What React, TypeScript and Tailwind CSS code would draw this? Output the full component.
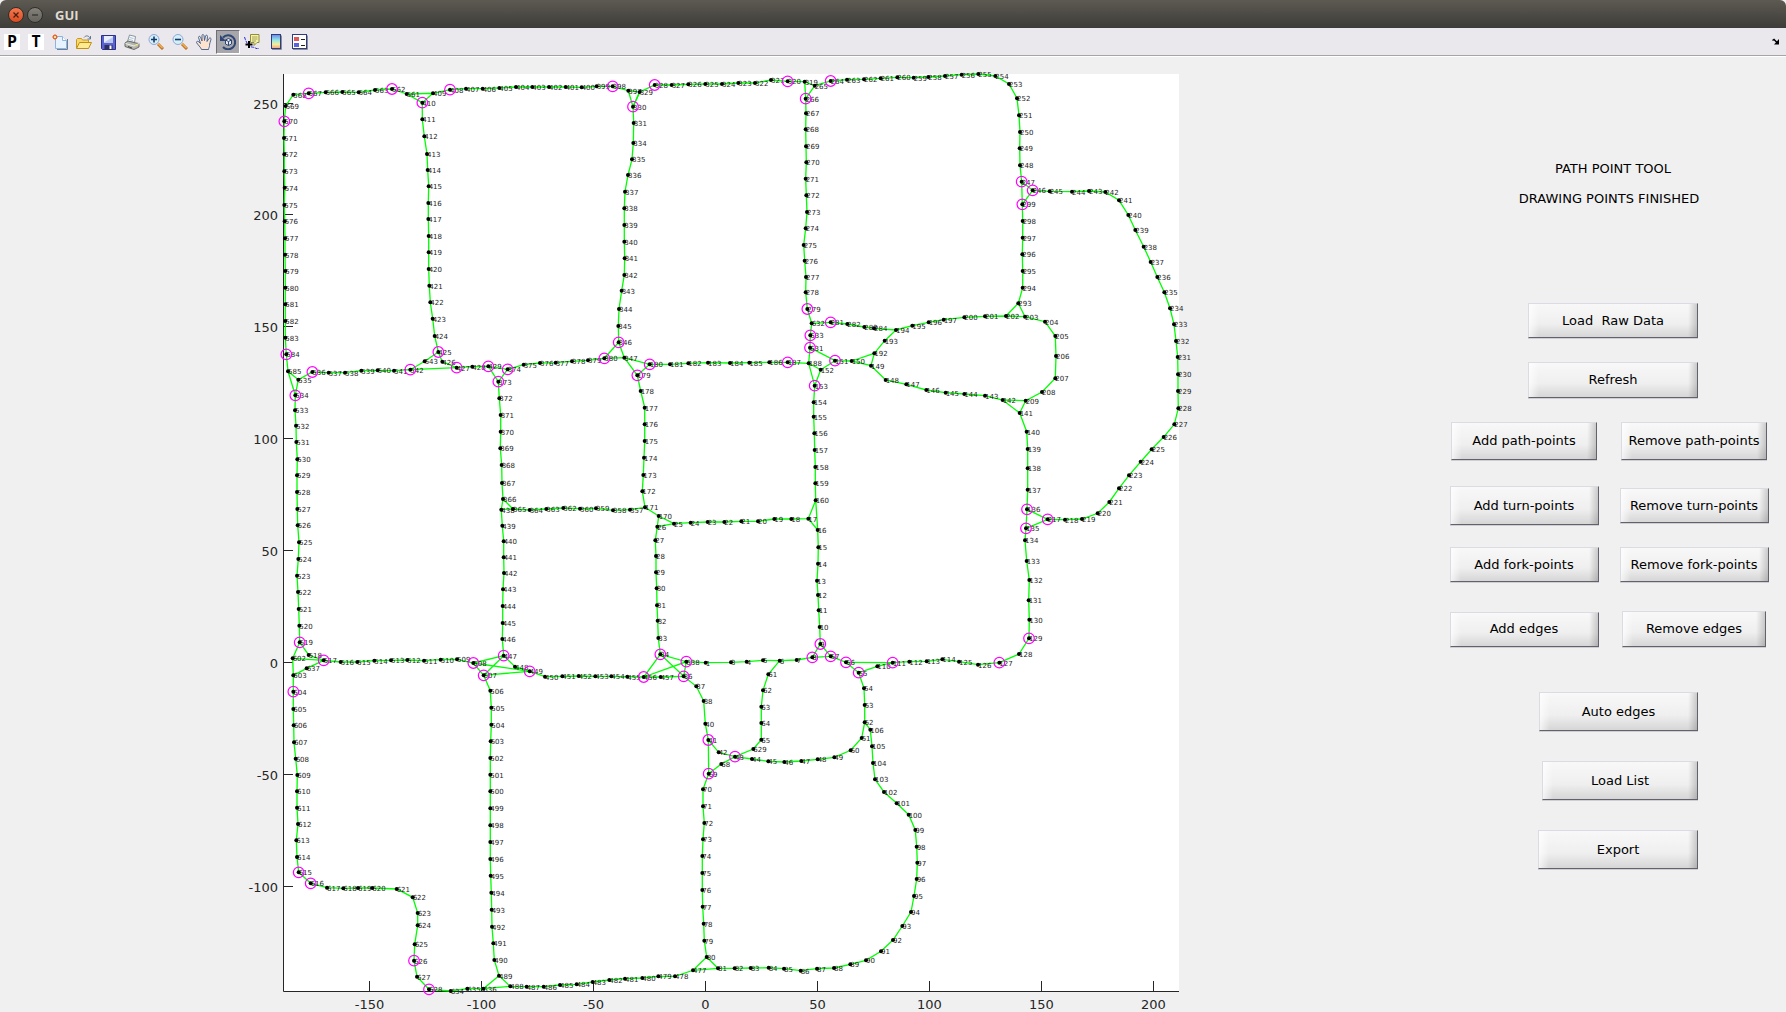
import type { ReactNode } from "react";

/* ---------- map data ---------- */

// Each sheet has its own origin; the entries are "id x y" in thirds of a unit.
const SHEETS: { x: number; y: number; points: string }[] = [
  {
    x: 270,
    y: 60,
    points: `568 70 104,567 116 100,566 167 97,565 217 96,564 266 97,563 315 90,562 366 87,561 410 102,409 489 100,408 540 89,407 588 86,406 638 86,405 688 84,404 738 81,403 787 81,402 837 81,401 887 81,400 935 82,
410 457 128,411 457 178,412 463 229,413 471 282,414 473 330,415 476 379,416 475 429,417 475 477,418 476 528,419 476 577,420 476 627,421 478 677,422 481 727,423 488 776,424 494 828,425 505 876,426 517 905,427 560 923,428 607 920,429 655 919,374 713 928,373 685 965,375 761 914,376 810 909,377 857 908,378 906 904,
569 47 138,570 43 184,571 42 234,572 43 283,573 43 334,574 44 383,575 43 435,576 44 484,577 45 535,578 45 584,579 46 633,580 46 683,581 46 733,582 46 783,583 46 833,584 49 883,585 54 934,535 85 959,536 127 936,537 176 938,538 225 938,539 274 932,540 323 931,541 372 932,542 421 929,543 464 904`,
  },
  {
    x: 580,
    y: 60,
    points: `399 50 79,398 98 79,397 145 92,329 179 96,328 224 75,327 275 75,326 325 73,325 376 72,324 426 72,323 475 69,322 525 69,321 573 60,320 623 64,319 674 65,265 704 77,264 752 63,263 801 59,262 852 58,261 902 55,
330 159 140,331 161 189,334 160 249,335 156 298,336 144 345,337 135 395,338 133 445,339 133 495,340 133 545,341 134 595,342 133 645,343 125 692,344 117 747,345 115 798,346 116 847,347 133 893,380 73 895,379 24 901,180 209 913,179 172 946,181 270 913,182 325 910,183 384 908,184 450 909,185 508 908,186 568 907,187 623 907,188 686 910,152 722 929,153 704 977,631 690 863,633 691 826,632 695 790,281 752 787,282 802 792,283 853 801,284 882 805,193 914 842,192 883 880,151 765 902,150 815 903,149 873 917,148 917 960,
266 677 116,267 678 160,268 677 208,269 678 259,270 679 307,271 677 356,272 679 406,273 681 456,274 677 505,275 671 555,276 674 602,277 678 651,278 677 697,279 682 747`,
  },
  {
    x: 890,
    y: 60,
    points: `260 22 52,259 71 53,258 115 51,257 165 48,256 215 44,255 265 42,254 316 48,253 357 72,252 381 115,251 387 166,250 390 216,249 389 265,248 390 316,247 395 365,246 428 391,245 479 394,244 546 395,243 597 393,242 646 396,241 687 421,240 715 465,239 736 510,238 761 560,237 782 606,236 802 651,235 823 697,234 840 745,233 852 793,232 858 843,231 863 891,230 864 943,
299 397 433,298 398 483,297 398 533,296 397 583,295 398 633,294 398 683,293 385 730,202 348 768,203 405 770,201 285 769,200 223 772,197 161 779,196 116 787,195 67 797,194 18 810,204 465 785,205 496 828,206 498 888,207 496 955`,
  },
  {
    x: 890,
    y: 370,
    points: `208 456 66,209 407 92,141 389 129,142 338 90,143 285 77,144 223 72,145 167 68,146 109 60,147 49 43,140 410 185,139 413 237,138 413 295,137 413 359,136 411 418,135 408 475,134 405 511,133 410 573,132 418 630,131 416 691,130 418 749,129 417 805,128 387 852,127 328 878,126 264 884,125 207 875,114 157 868,113 110 874,112 58 875,111 8 878,
217 473 448,218 525 449,219 576 447,220 623 430,221 658 396,222 687 355,223 717 316,224 752 275,225 785 238,226 821 201,227 853 163,228 865 115,229 864 63`,
  },
  {
    x: 270,
    y: 370,
    points: `534 76 76,533 75 121,532 78 167,531 79 216,530 82 268,529 81 316,528 81 366,527 82 417,526 83 466,525 87 517,524 85 567,523 81 617,522 84 666,521 86 717,520 88 767,519 89 817,518 116 855,517 161 871,602 68 865,637 110 895,603 70 916,604 70 965,516 212 876,515 262 876,514 313 872,513 363 871,512 412 870,511 462 872,510 512 869,509 561 868,508 610 879,507 641 916,506 661 962,447 701 857,448 735 890,449 779 904,450 825 920,451 877 919,452 926 918,
372 688 85,371 692 135,370 692 185,369 691 235,368 695 285,367 696 339,366 699 387,365 729 417,438 694 419,364 779 420,363 829 417,362 880 414,439 697 467,440 701 514,441 701 562,442 702 609,443 699 658,444 698 708,445 698 759,446 697 807`,
  },
  {
    x: 580,
    y: 370,
    points: `360 0 416,359 48 415,358 99 421,357 150 419,171 195 412,170 236 438,172 187 364,173 190 315,174 192 263,175 194 213,176 194 163,177 194 113,178 182 63,25 282 461,26 232 470,24 332 458,23 383 456,22 433 456,21 484 454,20 534 454,19 583 447,18 634 447,17 685 446,16 713 480,160 707 391,159 706 340,158 706 291,157 704 240,156 703 190,155 701 140,154 701 97,
15 715 532,14 714 581,13 711 632,12 714 675,11 716 721,10 719 771,9 721 822,8 697 862,57 752 859,7 650 870,6 599 872,5 549 871,4 500 875,3 453 877,1 377 878,638 319 875,34 241 853,33 235 804,32 233 752,31 231 706,30 230 655,29 228 607,28 228 558,27 226 511,36 311 919,456 191 921,457 242 921,455 142 920,454 94 919,453 46 919,37 349 949,61 565 913,62 549 961,56 798 877,55 836 908,110 892 889,54 852 955`,
  },
  {
    x: 240,
    y: 690,
    points: `605 160 57,606 161 106,607 162 157,608 167 206,609 172 255,610 171 304,611 171 353,612 174 402,613 169 451,614 171 501,615 176 547,616 212 580,617 261 593,618 310 595,619 354 594,620 397 594,621 470 597,622 518 622,623 533 669,624 533 706,625 524 763,626 522 812,627 531 860,628 567 898,634 632 903,635 682 896,636 730 896,
505 754 53,504 754 104,503 752 154,502 751 204,501 751 254,500 751 304,499 751 355,498 751 406,497 751 456,496 751 507,495 752 557,494 754 608,493 755 659,492 756 710,491 760 760,490 763 810,489 777 857,488 811 889,487 860 890,486 911 890,485 960 885`,
  },
  {
    x: 570,
    y: 690,
    points: `38 401 33,40 406 101,41 415 150,42 446 187,43 495 200,44 546 207,45 595 214,46 643 216,47 694 213,48 743 208,49 793 202,50 842 181,51 875 144,52 884 97,53 884 45,106 901 119,105 906 169,104 909 219,103 915 268,102 942 306,101 980 340,100 1016 374,99 1036 420,98 1040 470,97 1042 518,96 1040 567,95 1032 618,94 1023 666,93 997 708,92 969 750,91 933 784,90 888 811,89 841 823,88 792 834,87 741 836,86 692 842,85 642 836,84 596 833,83 542 834,82 494 835,81 444 835,80 410 801,
629 550 177,65 574 149,64 574 99,63 574 50,68 454 222,69 416 251,70 399 298,71 399 349,72 403 399,73 399 448,74 397 498,75 397 549,76 397 600,77 398 650,78 401 701,79 403 752,477 369 841,478 315 859,479 265 859,480 217 864,481 165 866,482 118 870,483 68 876,484 20 883`,
  },
];

// Runs of connected points; "a-b" walks every existing id between a and b.
const PATHS = [
  "585-561,410-425,426-429,374-380,347,180-188,153-160,16-9,57-55",
  "561,409,410", "409-397,330,329-319,266", "397,329,330-347", "319,265,266-279,632,633,631,188",
  "265-246,299-293,202", "247,299", "293,203-209,141-136,135-125,114-111,110,55", "56,111",
  "246-217,135", "217,136", "380,346", "347,179-171,170,26-34,36", "179,180", "188,152,153", "151,152",
  "632,281-284,194-197,200-203", "631,151-141", "150,192,149", "192-194", "142,209",
  "425,543-535,534-519,518-512,511-508,507-489,488-477,80", "542,427", "429,373", "374-362,360-357,171",
  "366,438-447,448-457,36-38,40-52,106-100,99-81,80", "438,365", "585,535", "585,534", "160,17-26", "17,16",
  "170,25", "9,8-3,1,638,36", "8,57", "6,61-65,629,43,68,69-80", "41,69", "55-52", "477,81",
  "519,602-628,634-636,488", "602,517,637,603", "636,489", "447,507,449,508,447", "34,638,456,34",
];

const CIRCLED = [
  567, 562, 408, 410, 570, 584, 425, 542, 536, 427, 429, 374, 373, 398, 328, 330, 320, 264, 266, 346, 380, 180, 179,
  187, 279, 281, 633, 631, 151, 153, 247, 246, 299, 136, 135, 217, 129, 127, 111, 534, 519, 517, 604, 508, 507, 447,
  449, 34, 638, 36, 456, 9, 8, 57, 56, 55, 41, 43, 69, 615, 616, 626, 628,
];

const POINTS = new Map<number, [number, number]>();
for (const sheet of SHEETS) {
  for (const entry of sheet.points.split(",")) {
    const [id, x, y] = entry.trim().split(" ").map(Number);
    POINTS.set(id, [sheet.x + x / 3, sheet.y + y / 3]);
  }
}

function walk(path: string): string {
  const out: string[] = [];
  for (const part of path.split(",")) {
    const [a, b = a] = part.split("-").map(Number);
    const step = a <= b ? 1 : -1;
    for (let id = a; id !== b + step; id += step) {
      const p = POINTS.get(id);
      if (p) out.push(`${p[0].toFixed(1)},${p[1].toFixed(1)}`);
    }
  }
  return out.join(" ");
}

const X_TICKS = [-150, -100, -50, 0, 50, 100, 150, 200];
const Y_TICKS = [250, 200, 150, 100, 50, 0, -50, -100];
const tickX = (v: number) => Math.round(705 + v * 2.238) + 0.5;
const tickY = (v: number) => Math.round(662 - v * 2.238) + 0.5;

function PathMap() {
  return (
    <svg viewBox="0 57 1430 954" className="block h-auto w-full" role="img" aria-label="Path point map">
      <rect x="283" y="74" width="896" height="917" fill="#fff" />
      <path d="M283.5 74V991.5H1179" fill="none" stroke="#262626" />
      {X_TICKS.map((v) => (
        <path key={v} d={`M${tickX(v)} 991V981`} stroke="#262626" />
      ))}
      {Y_TICKS.map((v) => (
        <path key={v} d={`M283 ${tickY(v)}H293`} stroke="#262626" />
      ))}
      <g fill="#262626" fontSize="13" fontFamily='"DejaVu Sans", sans-serif'>
        {X_TICKS.map((v) => (
          <text key={v} x={tickX(v)} y="1009" textAnchor="middle">
            {v}
          </text>
        ))}
        {Y_TICKS.map((v) => (
          <text key={v} x="278" y={tickY(v) + 5} textAnchor="end">
            {v}
          </text>
        ))}
      </g>
      <g fill="none" stroke="#00ff00" strokeWidth="1.3">
        {PATHS.map((p) => (
          <polyline key={p} points={walk(p)} />
        ))}
      </g>
      <g fill="#1c1c1c" fontSize="7" fontFamily='"DejaVu Sans", sans-serif'>
        {[...POINTS].map(([id, [x, y]]) => (
          <text key={id} x={x} y={y + 3}>
            {id}
          </text>
        ))}
      </g>
      {[...POINTS].map(([id, [x, y]]) => (
        <circle key={id} cx={x} cy={y} r="2" />
      ))}
      <g fill="none" stroke="#ff00ff" strokeWidth="1.2">
        {CIRCLED.map((id) => {
          const [x, y] = POINTS.get(id)!;
          return <circle key={id} cx={x} cy={y} r="5.3" />;
        })}
      </g>
    </svg>
  );
}

/* ---------- tool bar ---------- */

function Icon({ children }: { children: ReactNode }) {
  return (
    <svg viewBox="0 0 16 16" className="size-4" aria-hidden="true">
      {children}
    </svg>
  );
}

function Letter({ children }: { children: string }) {
  return (
    <span className="flex size-4 items-center justify-center bg-white font-['DejaVu_Sans_Mono',monospace] text-[16px] leading-4 font-bold text-black">
      {children}
    </span>
  );
}

function Magnifier({ plus }: { plus?: boolean }) {
  return (
    <Icon>
      <path d="M10 10l5 5" stroke="#b8752a" strokeWidth="3" />
      <path d="M10 9.500l4.500 4.500" stroke="#f3ac4e" strokeWidth="1.500" />
      <circle cx="6" cy="5.500" r="5" fill="#d3f0f5" stroke="#8fa6d8" />
      <path d={plus ? "M3 5.500h6M6 2.500v6" : "M3 5.500h6"} stroke="#16386e" strokeWidth="1.600" />
    </Icon>
  );
}

const TOOLS: { name: string; icon: ReactNode; active?: boolean }[] = [
  { name: "Path points", icon: <Letter>P</Letter> },
  { name: "Turn points", icon: <Letter>T</Letter> },
  {
    name: "New figure",
    icon: (
      <Icon>
        <path d="M5 15.500h10.500V5" fill="none" stroke="#6d7f96" />
        <path d="M3.500 2.500h7l4 4v8h-11z" fill="#e6f2fd" stroke="#8db4dc" />
        <path d="M10.500 2.500v4h4" fill="#fff" stroke="#8db4dc" />
        <path d="M3 0v6M0 3h6M1 1l4 4M5 1L1 5" stroke="#e08a5a" />
        <circle cx="3" cy="3" r="1.800" fill="#ffe08a" stroke="#e0562e" />
      </Icon>
    ),
  },
  {
    name: "Open file",
    icon: (
      <Icon>
        <path d="M8 3.500c2-2.500 5-2 6 1M14.500 2v3h-3" fill="none" stroke="#5d7796" />
        <path d="M.5 14V5.500l1-1h4l1 1.500h6v2" fill="#f7d774" stroke="#c89a1c" />
        <path d="M.5 14.500l3-6h12l-3 6z" fill="#fdea93" stroke="#c08f12" />
      </Icon>
    ),
  },
  {
    name: "Save figure",
    icon: (
      <Icon>
        <path d="M1.500 1.500h14v14h-13l-1-1z" fill="#5a62cf" stroke="#2b2f86" />
        <rect x="4" y="2" width="9" height="7" fill="#e9eefb" />
        <path d="M4 8.500L13 3v6H4z" fill="#b9c8ee" />
        <rect x="4.500" y="11" width="8" height="4.500" fill="#2c2f5c" />
        <rect x="9.500" y="11.500" width="2" height="3.500" fill="#fff" />
      </Icon>
    ),
  },
  {
    name: "Print figure",
    icon: (
      <Icon>
        <path d="M3.500 7.500l2-6.500 6 1.500-1 6z" fill="#f7fafc" stroke="#8b959c" />
        <path d="M5.500 3.500l4 1M5 5.500l4 1" stroke="#a8c4d8" />
        <path d="M1 9l3-2 8 2 3 .5v3.500l-5 2.500-9-3z" fill="#b6b6b0" stroke="#6a6a66" />
        <path d="M1.500 9.500l8.500 2.500 5-2.500" fill="none" stroke="#efefec" />
        <path d="M4 12.500l4 1.500" stroke="#44443f" />
        <path d="M11 12l3-1" stroke="#e8d44a" />
      </Icon>
    ),
  },
  { name: "Zoom in", icon: <Magnifier plus /> },
  { name: "Zoom out", icon: <Magnifier /> },
  {
    name: "Pan",
    icon: (
      <Icon>
        <path
          d="M5.500 15.500C5 13.500 1.500 10.500.5 8.500c0-1.500 1.500-1.500 2.500-.5l1.500 1.500L2.500 3.500c0-1.500 1.500-1.500 2-.5L6 7V1.500c0-1.300 1.600-1.300 2 0L8.500 6.500l1-4.500c.4-1.300 2-1 2 .3L11 7.500l2-3c.8-1.200 2.200-.5 2 .7-.5 2.300-1.500 4.300-1.500 6.300 0 2-1 2.500-1 4z"
          fill="#fde3cd"
          stroke="#3a5a8c"
          strokeWidth=".9"
        />
      </Icon>
    ),
  },
  {
    name: "Rotate 3D",
    active: true,
    icon: (
      <Icon>
        <path d="M3 3.500a7 7 0 1 1 0 9.500" fill="none" stroke="#2f4674" strokeWidth="2" />
        <path d="M0 1v6h6z" fill="#2f4674" />
        <path d="M8.500 4.500l3 1.500v4l-3 1.500-3-1.500V6z" fill="#e3e8f2" stroke="#2f4674" />
        <path d="M5.500 6l3 1.500 3-1.500M8.500 7.500v4" fill="none" stroke="#2f4674" />
      </Icon>
    ),
  },
  {
    name: "Data cursor",
    icon: (
      <Icon>
        <path d="M.5 3c1 3 1.500 5 4 8 3 3.500 5 1 7.500 3.500h3" fill="none" stroke="#2a2ad8" strokeDasharray="3 1" />
        <path d="M6.500.5h8.500v8h-2l-3 3v-3H6.500z" fill="#f6f3a6" stroke="#8f8c3c" />
        <path d="M8 3h5.500M8 5h5.500M8 7h4" stroke="#a3a05a" />
        <path d="M5 7v7M1.500 10.500h7" stroke="#000" strokeWidth="2" />
      </Icon>
    ),
  },
  {
    name: "Insert colorbar",
    icon: (
      <Icon>
        <defs>
          <linearGradient id="bar" x1="0" y1="0" x2="0" y2="1">
            <stop offset="0" stopColor="#6f86ea" />
            <stop offset=".4" stopColor="#8fe6ea" />
            <stop offset=".7" stopColor="#f2ef9a" />
            <stop offset="1" stopColor="#f0a08c" />
          </linearGradient>
        </defs>
        <path d="M4 15.500h9.500V1.500" fill="none" stroke="#8d8d99" />
        <rect x="3.500" y=".5" width="9" height="14" fill="url(#bar)" stroke="#2e3d7e" />
      </Icon>
    ),
  },
  {
    name: "Insert legend",
    icon: (
      <Icon>
        <path d="M1 15.500h14.500V1.500" fill="none" stroke="#8d8d99" />
        <rect x=".5" y=".5" width="14" height="14" fill="#fff" stroke="#2e3d7e" />
        <rect x="2" y="3" width="5" height="4" fill="#e25757" />
        <rect x="2" y="9" width="5" height="4" fill="#5b62dc" />
        <path d="M9 5.500h4M9 11.500h4" stroke="#222" />
      </Icon>
    ),
  },
];

function ToolBar() {
  return (
    <div className="flex h-7 items-center border-b border-[#a5a5a5] bg-[#eae8ed] pr-1.5">
      {TOOLS.map((t) => (
        <button
          key={t.name}
          type="button"
          title={t.name}
          aria-label={t.name}
          className={
            t.active
              ? "flex size-6 items-center justify-center border border-[#6f6f73] border-r-white border-b-white bg-[#a7a7ab]"
              : "flex size-6 items-center justify-center"
          }
        >
          {t.icon}
        </button>
      ))}
      <button type="button" aria-label="Dock figure" className="ml-auto flex size-2">
        <svg viewBox="0 0 8 8" className="size-2" aria-hidden="true">
          <path d="M.5 2.500L2 1.500 5.500 5" fill="none" stroke="#000" strokeWidth="1.500" />
          <path d="M7 1v5.500H2z" />
        </svg>
      </button>
    </div>
  );
}

/* ---------- control panel ---------- */

function PanelButton({ className, children }: { className: string; children: string }) {
  return (
    <button
      type="button"
      className={`border border-[#dadbe3] border-r-[#62626c] border-b-[#62626c] bg-[linear-gradient(90deg,rgba(255,255,255,.7),transparent_10px,transparent_calc(100%-9px),rgba(0,0,0,.18)),linear-gradient(#f8f8f8,#efefef_60%,#d6d6d6)] text-center whitespace-pre shadow-[0_1px_0_#cfcfd3] ${className}`}
    >
      {children}
    </button>
  );
}

function ControlPanel() {
  return (
    <aside className="flex w-[356px] shrink-0 flex-col pt-[104px] pr-[7px] pl-[9px] font-['DejaVu_Sans',sans-serif] text-[13px] leading-4 text-black">
      <p className="pl-2 text-center">PATH POINT TOOL</p>
      <p className="mt-3.5 text-center">DRAWING POINTS FINISHED</p>
      <div className="mt-24 flex flex-col items-center gap-6 pl-2">
        <PanelButton className="h-[35px] w-[170px]">{"Load  Raw Data"}</PanelButton>
        <PanelButton className="h-[36px] w-[170px]">Refresh</PanelButton>
      </div>
      <div className="mt-6 grid grid-cols-2 place-items-center gap-y-[26px]">
        <PanelButton className="h-[38px] w-[146px]">Add path-points</PanelButton>
        <PanelButton className="h-[38px] w-[146px]">Remove path-points</PanelButton>
        <PanelButton className="h-[39px] w-[149px]">Add turn-points</PanelButton>
        <PanelButton className="h-[35px] w-[149px]">Remove turn-points</PanelButton>
      </div>
      <div className="mt-[22px] grid grid-cols-2 place-items-center gap-y-[29px]">
        <PanelButton className="h-[35px] w-[149px]">Add fork-points</PanelButton>
        <PanelButton className="h-[35px] w-[149px]">Remove fork-points</PanelButton>
        <PanelButton className="h-[35px] w-[149px]">Add edges</PanelButton>
        <PanelButton className="h-[36px] w-[144px]">Remove edges</PanelButton>
      </div>
      <div className="mt-[45px] mb-8 flex flex-col items-end gap-[30px] pr-[81px]">
        <PanelButton className="h-[39px] w-[159px]">Auto edges</PanelButton>
        <PanelButton className="h-[39px] w-[156px]">Load List</PanelButton>
        <PanelButton className="h-[39px] w-[160px]">Export</PanelButton>
      </div>
    </aside>
  );
}

export default function App() {
  return (
    <div className="flex min-h-screen flex-col bg-[#f0f0f0]">
      <header className="flex h-7 items-center rounded-t-md bg-linear-to-b from-[#5d5a52] to-[#3d3c38] pt-px pl-2">
        <button
          type="button"
          aria-label="Close"
          className="flex size-4 items-center justify-center rounded-full border border-[#2f2e2a] bg-linear-to-b from-[#f4784f] to-[#dd4a1f]"
        >
          <svg viewBox="0 0 6 6" className="size-1.5" aria-hidden="true">
            <path d="M.5.5l5 5M5.500.5l-5 5" stroke="#43200f" strokeWidth="1.200" />
          </svg>
        </button>
        <button
          type="button"
          aria-label="Minimize"
          className="ml-[3px] flex size-4 items-center justify-center rounded-full border border-[#2f2e2a] bg-linear-to-b from-[#84827b] to-[#65635c]"
        >
          <svg viewBox="0 0 6 6" className="size-1.5" aria-hidden="true">
            <path d="M0 3h6" stroke="#2f2e2a" strokeWidth="1.200" />
          </svg>
        </button>
        <h1 className="ml-3 font-['Open_Sans',sans-serif] text-[13px] leading-6 font-bold text-[#dfdbd2]">GUI</h1>
      </header>
      <ToolBar />
      <main className="flex flex-1 items-start border-t border-white">
        <div className="min-w-0 flex-1">
          <PathMap />
        </div>
        <ControlPanel />
      </main>
    </div>
  );
}
